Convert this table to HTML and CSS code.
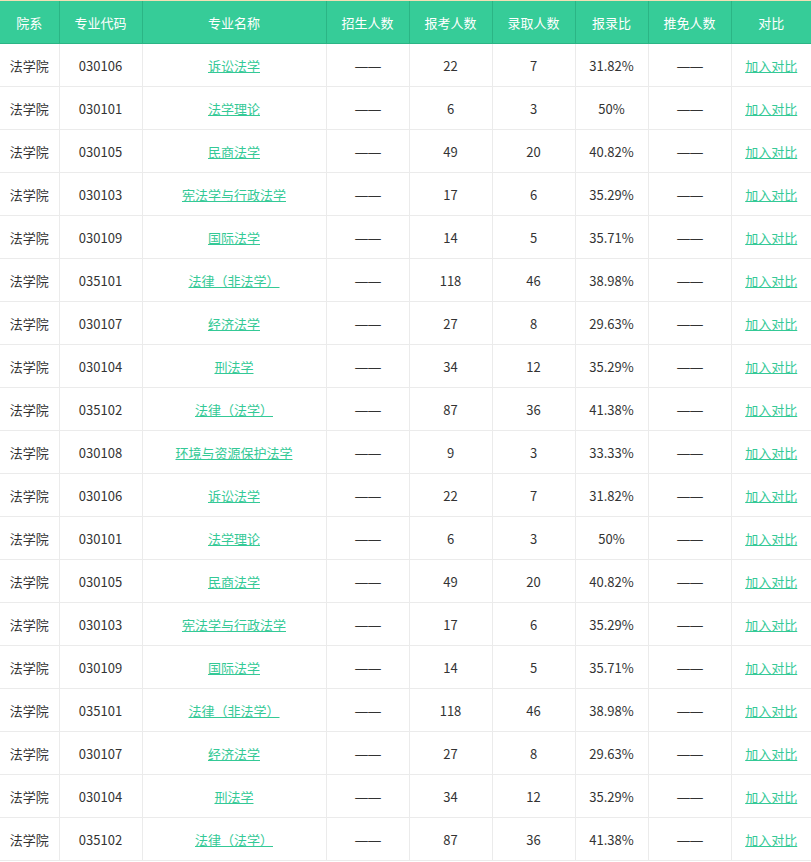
FILE: index.html
```html
<!DOCTYPE html>
<html lang="zh">
<head>
<meta charset="utf-8">
<link rel="stylesheet" href="styles.css">
</head>
<body>
<div class="strip"></div>
<table class="grid">
<colgroup>
<col class="c1"><col class="c2"><col class="c3"><col class="c4"><col class="c5"><col class="c6"><col class="c7"><col class="c8"><col class="c9">
</colgroup>
<thead>
<tr><th>院系</th><th>专业代码</th><th>专业名称</th><th>招生人数</th><th>报考人数</th><th>录取人数</th><th>报录比</th><th>推免人数</th><th>对比</th></tr>
</thead>
<tbody id="rows"></tbody>
</table>
<script src="app.js"></script>
</body>
</html>
```
FILE: app.js
```js
var data = [
["030106","诉讼法学","22","7","31.82%"],
["030101","法学理论","6","3","50%"],
["030105","民商法学","49","20","40.82%"],
["030103","宪法学与行政法学","17","6","35.29%"],
["030109","国际法学","14","5","35.71%"],
["035101","法律（非法学）","118","46","38.98%"],
["030107","经济法学","27","8","29.63%"],
["030104","刑法学","34","12","35.29%"],
["035102","法律（法学）","87","36","41.38%"],
["030108","环境与资源保护法学","9","3","33.33%"]
];
var list = data.concat(data.slice(0, 9));
var html = "";
list.forEach(function (r) {
  html += "<tr><td>法学院</td><td>" + r[0] + "</td><td><a href=\"#\" class=\"lnk\">" + r[1] +
    "</a></td><td><span class=\"dash\">——</span></td><td>" + r[2] + "</td><td>" + r[3] + "</td><td>" + r[4] +
    "</td><td><span class=\"dash\">——</span></td><td><a href=\"#\" class=\"lnk\">加入对比</a></td></tr>";
});
document.getElementById("rows").innerHTML = html;
```
FILE: styles.css
```css
html, body {
  margin: 0;
  padding: 0;
  background: #fff;
}
body {
  font-family: "Noto Sans CJK SC", "Noto Sans", sans-serif;
  font-size: 13px;
  color: #333;
}
.strip {
  height: 1px;
  background: #f3dfb5;
}
.grid {
  width: 811px;
  border-collapse: collapse;
  table-layout: fixed;
}
.c1 { width: 59px; }
.c2 { width: 83px; }
.c3 { width: 184px; }
.c4 { width: 83px; }
.c5 { width: 83px; }
.c6 { width: 83px; }
.c7 { width: 73px; }
.c8 { width: 83px; }
.c9 { width: 80px; }
.grid th {
  height: 42px;
  padding: 0;
  background: #36cc98;
  color: #fff;
  font-weight: normal;
  border: 1px solid #2bb585;
  border-top: none;
  text-align: center;
}
.grid th:first-child { border-left: none; }
.grid th:last-child { border-right: none; }
.grid td {
  height: 42px;
  padding: 0;
  text-align: center;
  border: 1px solid #ebebeb;
  white-space: nowrap;
}
.grid td:first-child { border-left: none; }
.grid td:last-child { border-right: none; }
.dash {
  font-family: "DejaVu Sans", sans-serif;
  font-size: 14px;
  color: #333;
  letter-spacing: -1px;
}
.lnk {
  color: #34c996;
  text-decoration: underline;
}
```
